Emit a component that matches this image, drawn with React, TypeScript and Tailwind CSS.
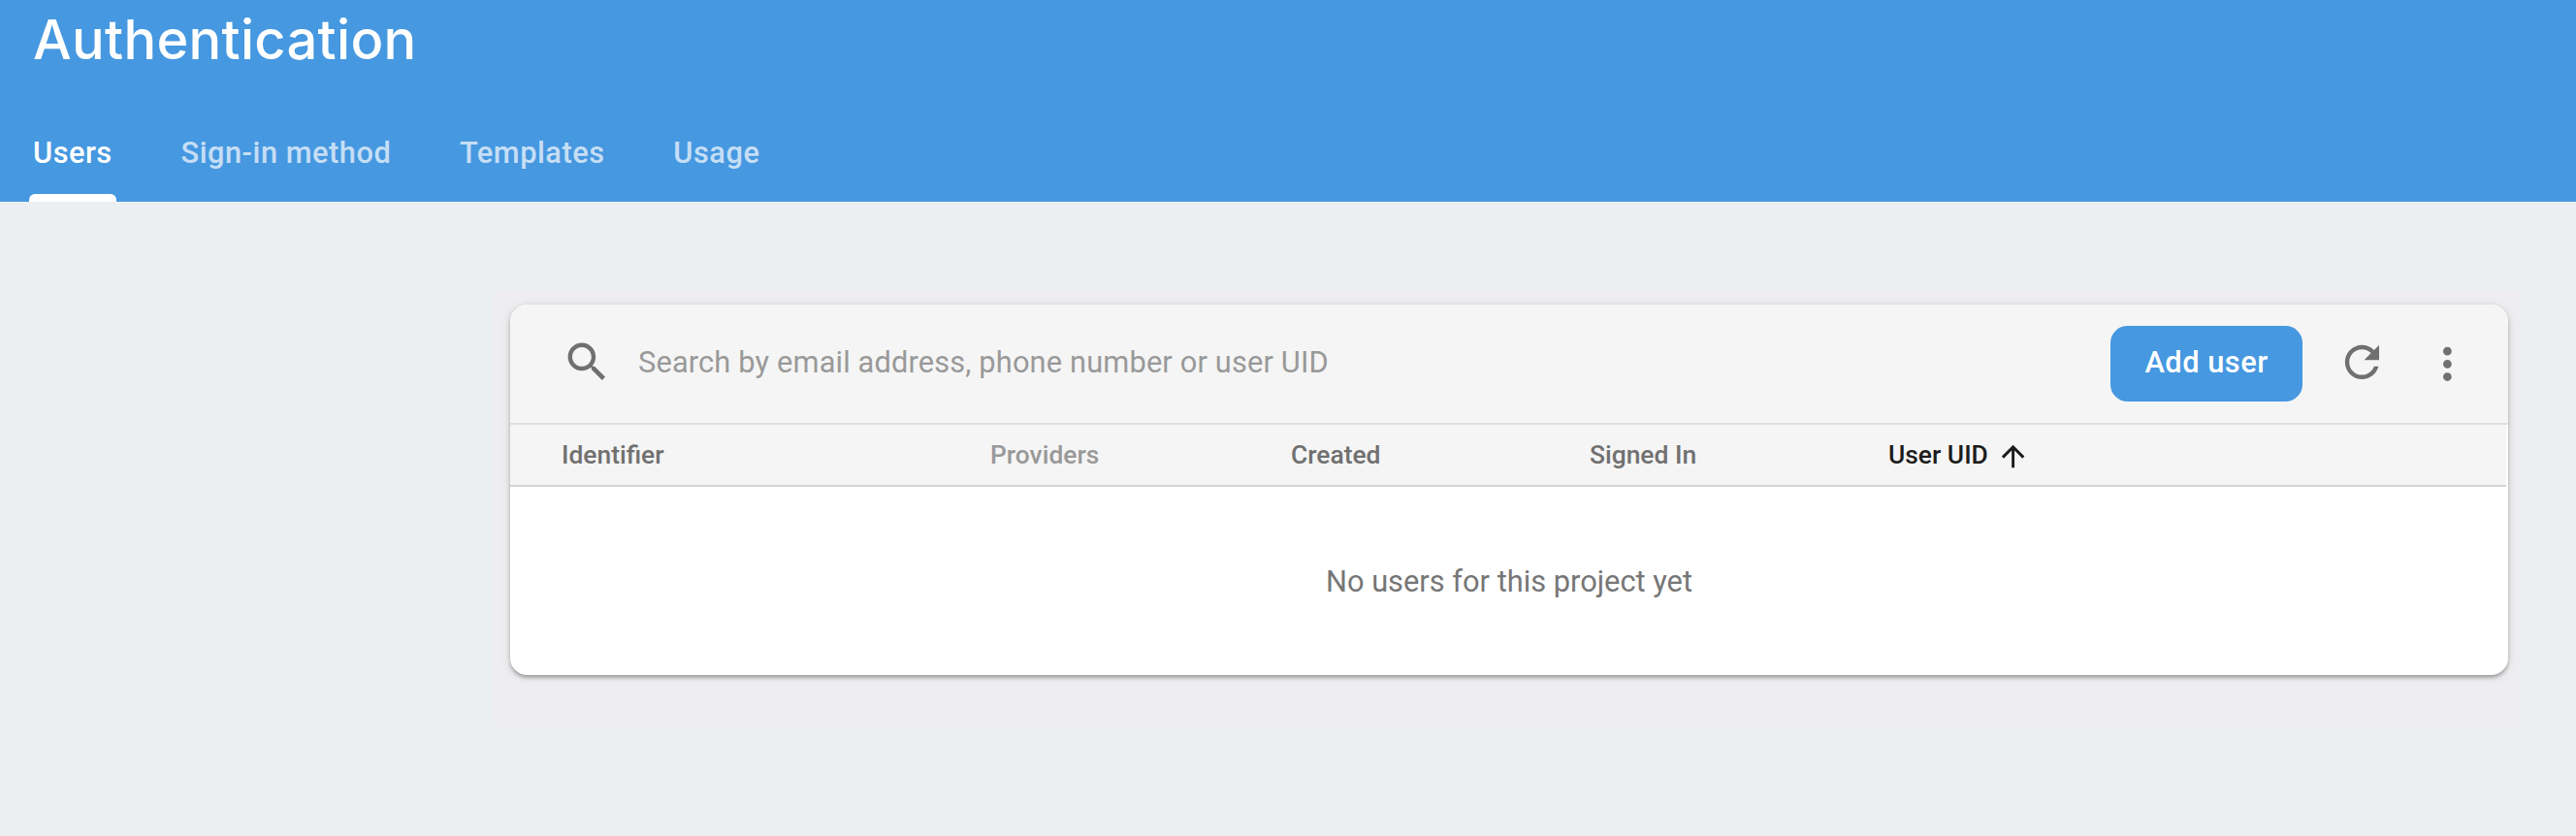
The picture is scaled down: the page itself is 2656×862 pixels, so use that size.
const tabs = ["Users", "Sign-in method", "Templates", "Usage"];

const columns = [
  { label: "Identifier", tone: "text-[#707070]" },
  { label: "Providers", tone: "text-[#999999]" },
  { label: "Created", tone: "text-[#707070]" },
  { label: "Signed In", tone: "text-[#707070]" },
  { label: "User UID", tone: "text-[#1c1c1c]", sorted: true },
];

function Icon({ d, className }: { d: string; className: string }) {
  return (
    <svg viewBox="0 0 24 24" fill="currentColor" className={`shrink-0 ${className}`} aria-hidden="true">
      <path d={d} />
    </svg>
  );
}

const SEARCH =
  "M15.5 14h-.79l-.28-.27C15.41 12.59 16 11.11 16 9.5 16 5.91 13.09 3 9.5 3S3 5.91 3 9.5 5.91 16 9.5 16c1.61 0 3.09-.59 4.23-1.57l.27.28v.79l5 4.99L20.49 19l-4.99-5zm-6 0C7.01 14 5 11.99 5 9.5S7.01 5 9.5 5 14 7.01 14 9.5 11.99 14 9.5 14z";
const REFRESH =
  "M17.65 6.35C16.2 4.9 14.21 4 12 4c-4.42 0-7.99 3.58-7.99 8s3.57 8 7.99 8c3.73 0 6.84-2.55 7.73-6h-2.08c-.82 2.33-3.04 4-5.65 4-3.31 0-6-2.69-6-6s2.69-6 6-6c1.66 0 3.14.69 4.22 1.78L13 11h7V4l-2.35 2.35z";
const MORE =
  "M12 8c1.1 0 2-.9 2-2s-.9-2-2-2-2 .9-2 2 .9 2 2 2zm0 2c-1.1 0-2 .9-2 2s.9 2 2 2 2-.9 2-2-.9-2-2-2zm0 6c-1.1 0-2 .9-2 2s.9 2 2 2 2-.9 2-2-.9-2-2-2z";
const ARROW_UP = "M4 12l1.41 1.41L11 7.83V20h2V7.83l5.58 5.59L20 12l-8-8-8 8z";

function Header() {
  return (
    <header className="flex h-[208px] flex-col justify-between bg-[#4698e0] text-white">
      <h1 className="pt-[5px] pl-[34px] font-['Inter',sans-serif] text-[56px] leading-[72px] font-medium tracking-[0.3px]">
        Authentication
      </h1>
      <nav className="flex gap-[62px] pl-[29.6px]">
        {tabs.map((tab, i) => (
          <a
            key={tab}
            className={`flex h-[101px] flex-col justify-between px-[4.4px] text-[30.8px] leading-none font-medium tracking-[0.5px] ${i === 0 ? "text-white" : "text-white/70"}`}
          >
            <span className="pt-[36px]">{tab}</span>
            {i === 0 && <span className="-mx-[4.4px] h-2 rounded-t-[6px] bg-white" />}
          </a>
        ))}
      </nav>
    </header>
  );
}

function Toolbar() {
  return (
    <div className="flex h-[124px] items-center border-b-2 border-[#dfdfdf] bg-[#f5f5f5] pr-[36px] pl-[53px] text-[#707070]">
      <Icon d={SEARCH} className="mb-[3px] size-[52.8px]" />
      <input
        className="mb-[3px] ml-[26.2px] h-12 flex-1 bg-transparent text-[30.8px] leading-none tracking-[0.145px] outline-none placeholder:text-[#999999]"
        placeholder="Search by email address, phone number or user UID"
      />
      <button className="h-[78px] w-[198px] rounded-[17.6px] bg-[#4698e0] pb-[1px] text-[30.8px] leading-none font-medium tracking-[0.5px] text-white">
        Add user
      </button>
      <Icon d={REFRESH} className="mb-[3px] ml-[35.2px] size-[52.8px]" />
      <Icon d={MORE} className="mt-[1px] ml-[35.2px] size-[52.8px]" />
    </div>
  );
}

export default function App() {
  return (
    <div className="h-[862px] w-full bg-[#ebeff2] font-['Roboto',sans-serif]">
      <Header />
      <main className="pt-[92px] pr-[56px] pl-[508px]">
        <div className="h-[449px] bg-[#eeeef0] pt-[14px] pr-[6px] pl-[18px]">
          <section className="flex h-[382px] w-[2060px] flex-col overflow-hidden rounded-[17.6px] bg-white shadow-[0_4px_4px_-2px_rgba(0,0,0,0.2),0_2px_4px_rgba(0,0,0,0.16),0_2px_10px_rgba(0,0,0,0.13)]">
            <Toolbar />
            <div className="mr-[2px] grid h-[64px] shrink-0 grid-cols-[442px_310px_308px_308px_1fr] items-center border-b-2 border-[#d4d4d4] bg-[#f5f5f5] pl-[53px] text-[26.4px] leading-none font-medium">
              {columns.map((c) => (
                <div key={c.label} className={`flex items-center ${c.tone}`}>
                  {c.label}
                  {c.sorted && <Icon d={ARROW_UP} className="mt-[3px] ml-[8px] size-[35.2px]" />}
                </div>
              ))}
            </div>
            <div className="flex flex-1 items-center justify-center pt-[2px] text-[30.8px] leading-none text-[#767676]">
              No users for this project yet
            </div>
          </section>
        </div>
      </main>
    </div>
  );
}
